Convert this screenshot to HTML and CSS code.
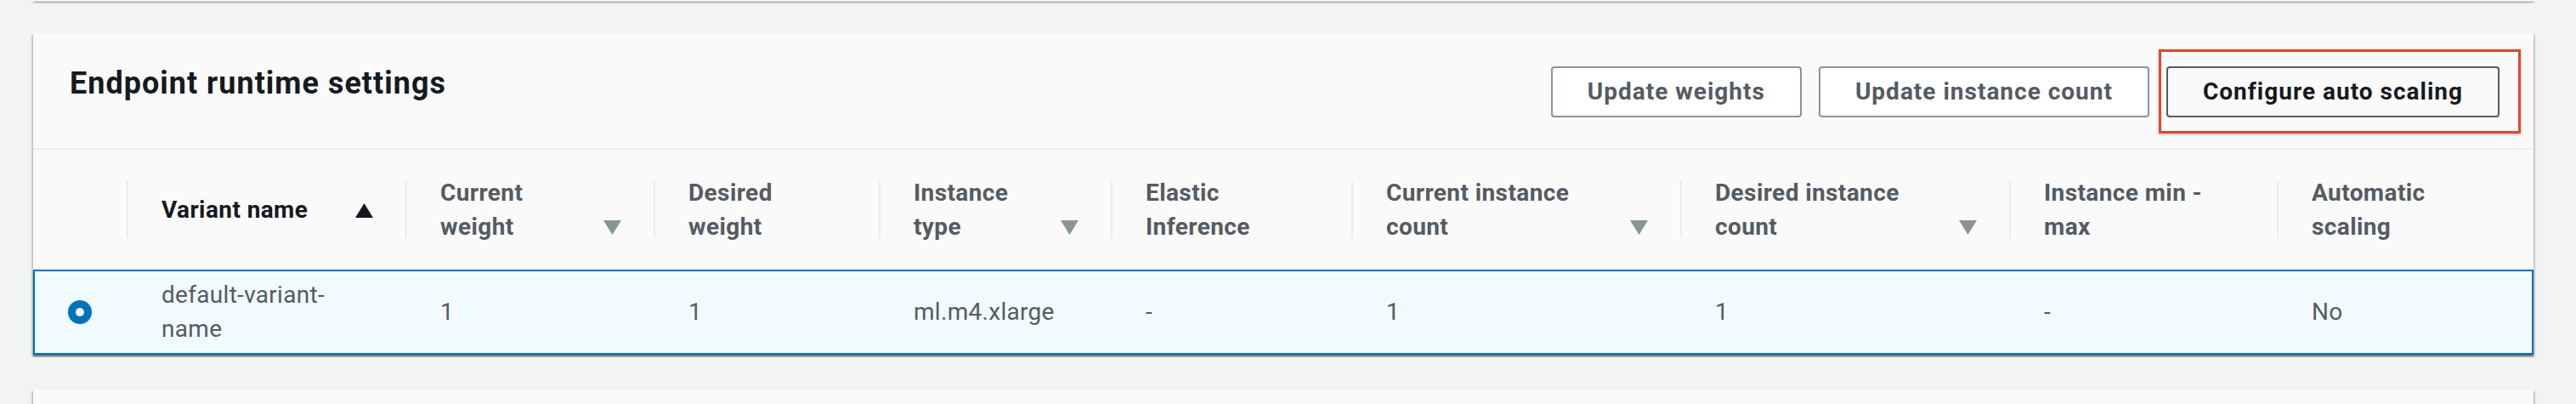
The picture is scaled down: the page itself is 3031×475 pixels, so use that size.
FILE: index.html
```html
<!DOCTYPE html>
<html lang="en">
<head>
<meta charset="utf-8">
<title>Endpoint runtime settings</title>
<link rel="stylesheet" href="styles.css">
</head>
<body>
<div class="page">
  <div class="card card-prev"></div>
  <section class="card">
    <header class="card-header">
      <h2 class="title">Endpoint runtime settings</h2>
      <div class="actions">
        <button class="btn" type="button">Update weights</button>
        <button class="btn" type="button">Update instance count</button>
        <div class="annotated">
          <button class="btn btn-active" type="button">Configure auto scaling</button>
          <span class="highlight"></span>
        </div>
      </div>
    </header>
    <table class="variants">
      <colgroup>
        <col class="c0"><col class="c1"><col class="c2"><col class="c3"><col class="c4">
        <col class="c5"><col class="c6"><col class="c7"><col class="c8"><col class="c9">
      </colgroup>
      <thead>
        <tr>
          <th></th>
          <th><div class="th"><span class="divider"></span><div class="label sorted"><span>Variant name</span><svg class="sort" viewBox="0 0 21 17"><polygon points="10.5,0 21,17 0,17"/></svg></div></div></th>
          <th><div class="th"><span class="divider"></span><div class="label"><span>Current<br>weight</span><svg class="sort" viewBox="0 0 21 17"><polygon points="0,0 21,0 10.5,17"/></svg></div></div></th>
          <th><div class="th"><span class="divider"></span><div class="label"><span>Desired<br>weight</span></div></div></th>
          <th><div class="th"><span class="divider"></span><div class="label"><span>Instance<br>type</span><svg class="sort" viewBox="0 0 21 17"><polygon points="0,0 21,0 10.5,17"/></svg></div></div></th>
          <th><div class="th"><span class="divider"></span><div class="label"><span>Elastic<br>Inference</span></div></div></th>
          <th><div class="th"><span class="divider"></span><div class="label"><span>Current instance<br>count</span><svg class="sort" viewBox="0 0 21 17"><polygon points="0,0 21,0 10.5,17"/></svg></div></div></th>
          <th><div class="th"><span class="divider"></span><div class="label"><span>Desired instance<br>count</span><svg class="sort" viewBox="0 0 21 17"><polygon points="0,0 21,0 10.5,17"/></svg></div></div></th>
          <th><div class="th"><span class="divider"></span><div class="label"><span>Instance min -<br>max</span></div></div></th>
          <th><div class="th"><span class="divider"></span><div class="label"><span>Automatic<br>scaling</span></div></div></th>
        </tr>
      </thead>
      <tbody>
        <tr class="selected">
          <td class="radio-cell"><span class="radio"></span></td>
          <td>default-variant-<br>name</td>
          <td>1</td>
          <td>1</td>
          <td>ml.m4.xlarge</td>
          <td>-</td>
          <td>1</td>
          <td>1</td>
          <td>-</td>
          <td>No</td>
        </tr>
      </tbody>
    </table>
  </section>
  <div class="card card-next"></div>
</div>
</body>
</html>
```

FILE: styles.css
```css
* { box-sizing: border-box; }

html, body {
  margin: 0;
  padding: 0;
  background: #f2f3f3;
  overflow: hidden;
}

body {
  font-family: Roboto, "Liberation Sans", sans-serif;
  color: #16191f;
}

.page {
  padding: 0 50px 0 39px;
}

.card {
  background: #fafafa;
  box-shadow: 0 2px 2px 0 rgba(0, 28, 36, 0.3), 2px 2px 2px 0 rgba(0, 28, 36, 0.15), -2px 2px 2px 0 rgba(0, 28, 36, 0.15);
}

.card-prev {
  height: 1px;
  margin-bottom: 38px;
}

.card-next {
  height: 120px;
  margin-top: 41px;
}

.card-header {
  display: flex;
  justify-content: space-between;
  align-items: flex-start;
  padding: 38px 40px 36px 43px;
  border-bottom: 2px solid #eaeded;
}

.title {
  margin: -1px 0 0;
  font-size: 36px;
  line-height: 44px;
  font-weight: 700;
  letter-spacing: 1px;
  color: #16191f;
}

.actions {
  display: flex;
  gap: 20px;
  margin-top: 1px;
}

.annotated {
  position: relative;
}

.btn {
  height: 60px;
  padding: 0 41px;
  border: 2px solid #879596;
  border-radius: 4px;
  background: #ffffff;
  color: #545b64;
  font-family: Roboto, "Liberation Sans", sans-serif;
  font-size: 28px;
  font-weight: 700;
  line-height: 56px;
  letter-spacing: 1px;
  white-space: nowrap;
}

.btn-active {
  border-color: #545b64;
  background: #fafafa;
  color: #16191f;
}

.highlight {
  position: absolute;
  left: -9px;
  top: -20px;
  right: -25px;
  bottom: -19px;
  border: 3px solid #e4452c;
  box-shadow: 0 1px 3px rgba(0, 0, 0, 0.25);
  pointer-events: none;
}

.variants {
  width: 100%;
  table-layout: fixed;
  border-collapse: separate;
  border-spacing: 0;
  font-size: 28px;
  line-height: 40px;
}

.c0 { width: 110px; }
.c1 { width: 328px; }
.c2 { width: 292px; }
.c3 { width: 265px; }
.c4 { width: 273px; }
.c5 { width: 283px; }
.c6 { width: 387px; }
.c7 { width: 387px; }
.c8 { width: 315px; }
.c9 { width: 302px; }

.variants th {
  height: 141px;
  padding: 0;
  vertical-align: middle;
  text-align: left;
  font-weight: 700;
  color: #545b64;
  letter-spacing: 0.4px;
}

.th {
  display: flex;
  align-items: center;
}

.divider {
  flex: 0 0 2px;
  height: 67px;
  background: #eaeded;
}

.label {
  flex: 1;
  display: flex;
  align-items: flex-end;
  justify-content: space-between;
  padding: 0 38px 0 39px;
}

.label.sorted {
  color: #16191f;
}

.sort {
  flex: 0 0 21px;
  width: 21px;
  height: 17px;
  margin-bottom: 11px;
  fill: #879596;
}

.sorted .sort {
  fill: #16191f;
}

.variants td {
  padding: 8px 0 8px 41px;
  vertical-align: middle;
  color: #545b64;
  letter-spacing: 0.3px;
  background: #f1faff;
  border-top: 2px solid #0073bb;
  border-bottom: 2px solid #0073bb;
}

.variants td:first-child {
  border-left: 2px solid #0073bb;
}

.variants td:last-child {
  border-right: 2px solid #0073bb;
}

.selected {
  box-shadow: 0 2px 2px rgba(0, 28, 36, 0.3);
}

.variants td.radio-cell {
  padding-left: 39px;
}

.radio {
  display: block;
  width: 28px;
  height: 28px;
  border-radius: 50%;
  border: 9px solid #0073bb;
  background: #ffffff;
}
```
